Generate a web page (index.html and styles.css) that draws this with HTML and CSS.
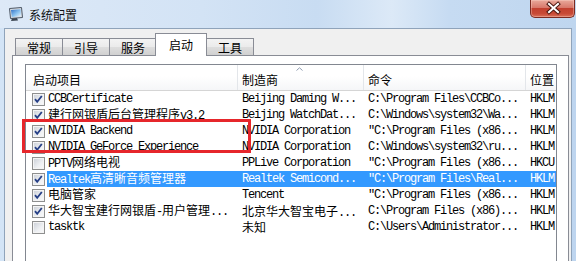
FILE: index.html
```html
<!DOCTYPE html>
<html lang="zh-CN">
<head>
    <meta charset="UTF-8">
    <title>系统配置</title>
    <link rel="stylesheet" href="styles.css">
</head>
<body>
    <div class="window">
        <div class="titlebar">
            <svg class="app-icon" viewBox="0 0 16 16">
                <defs>
                    <linearGradient id="scr" x1="0" y1="0" x2="1" y2="1">
                        <stop offset="0" stop-color="#2f6fc4"/>
                        <stop offset="0.55" stop-color="#8cc4f0"/>
                        <stop offset="1" stop-color="#f2f7fb"/>
                    </linearGradient>
                </defs>
                <path d="M1.5 2.5 L13.5 1.5 L14.5 11.5 L2.5 12.5 Z" fill="#d9dde2" stroke="#4d5866"/>
                <path d="M3 4 L12.5 3.2 L13.2 10.2 L3.8 11 Z" fill="url(#scr)"/>
                <path d="M4 12.5 L9 12 L10 14.5 L3 15 Z" fill="#3c4652"/>
            </svg>
            <span class="title">系统配置</span>
            <div class="close">
                <svg viewBox="0 0 45 18" width="45" height="18">
                    <path d="M19 5 L28 13 M28 5 L19 13" stroke="#4a1710" stroke-width="4" stroke-linecap="square"/>
                    <path d="M19 5 L28 13 M28 5 L19 13" stroke="#fff" stroke-width="2" stroke-linecap="square"/>
                </svg>
            </div>
        </div>

        <div class="client">
            <div class="tabs">
                <div class="tab">常规</div>
                <div class="tab">引导</div>
                <div class="tab">服务</div>
                <div class="tab active">启动</div>
                <div class="tab">工具</div>
            </div>

            <div class="panel">
                <div class="list">
                    <div class="header">
                        <div class="hcell first">启动项目</div>
                        <div class="hcell sorted">
                            制造商
                            <svg class="sort-arrow" viewBox="0 0 7 4" width="7" height="4">
                                <path d="M0.5 3.5 L3.5 0.8 L6.5 3.5" fill="none" stroke="#8d9bb0" stroke-width="1"/>
                            </svg>
                        </div>
                        <div class="hcell">命令</div>
                        <div class="hcell">位置</div>
                    </div>

                    <div class="row">
                        <div class="cell first"><span class="cb on"></span><span class="name">CCBCertificate</span></div>
                        <div class="cell">Beijing Daming W...</div>
                        <div class="cell">C:\Program Files\CCBCo...</div>
                        <div class="cell">HKLM'</div>
                    </div>
                    <div class="row">
                        <div class="cell first"><span class="cb on"></span><span class="name"><span class="cj">建行网银盾后台管理程序</span>v3.2</span></div>
                        <div class="cell">Beijing WatchDat...</div>
                        <div class="cell">C:\Windows\system32\Wa...</div>
                        <div class="cell">HKLM'</div>
                    </div>
                    <div class="row">
                        <div class="cell first"><span class="cb on"></span><span class="name">NVIDIA Backend</span></div>
                        <div class="cell">NVIDIA Corporation</div>
                        <div class="cell">"C:\Program Files (x86...</div>
                        <div class="cell">HKLM'</div>
                    </div>
                    <div class="row">
                        <div class="cell first"><span class="cb on"></span><span class="name">NVIDIA GeForce Experience</span></div>
                        <div class="cell">NVIDIA Corporation</div>
                        <div class="cell">C:\Windows\system32\ru...</div>
                        <div class="cell">HKLM'</div>
                    </div>
                    <div class="row">
                        <div class="cell first"><span class="cb"></span><span class="name">PPTV<span class="cj">网络电视</span></span></div>
                        <div class="cell">PPLive Corporation</div>
                        <div class="cell">"C:\Program Files (x86...</div>
                        <div class="cell">HKCU'</div>
                    </div>
                    <div class="row selected">
                        <div class="cell first"><span class="cb on"></span><span class="name">Realtek<span class="cj">高清晰音频管理器</span></span></div>
                        <div class="cell">Realtek Semicond...</div>
                        <div class="cell">"C:\Program Files\Real...</div>
                        <div class="cell">HKLM'</div>
                    </div>
                    <div class="row">
                        <div class="cell first"><span class="cb on"></span><span class="name"><span class="cj">电脑管家</span></span></div>
                        <div class="cell">Tencent</div>
                        <div class="cell">"C:\Program Files (x86...</div>
                        <div class="cell">HKLM'</div>
                    </div>
                    <div class="row">
                        <div class="cell first"><span class="cb on"></span><span class="name"><span class="cj">华大智宝建行网银盾</span>-<span class="cj">用户管理</span>...</span></div>
                        <div class="cell"><span class="cj">北京华大智宝电子</span>...</div>
                        <div class="cell">C:\Program Files (x86)...</div>
                        <div class="cell">HKLM'</div>
                    </div>
                    <div class="row">
                        <div class="cell first"><span class="cb"></span><span class="name">tasktk</span></div>
                        <div class="cell"><span class="cj">未知</span></div>
                        <div class="cell">C:\Users\Administrator...</div>
                        <div class="cell">HKLM'</div>
                    </div>
                </div>
            </div>
        </div>

        <div class="mark"></div>
    </div>
</body>
</html>
```

FILE: styles.css
```css
body {
    margin: 0;
    width: 576px;
    height: 261px;
    overflow: hidden;
    font-family: "Noto Sans CJK SC", sans-serif;
    font-size: 12px;
    color: #000;
}
.window {
    position: relative;
    height: 261px;
    display: flex;
    flex-direction: column;
    background: linear-gradient(to right, #d3e4f6, #c9ddf3 60%, #bed5ef);
}
.titlebar {
    flex: none;
    height: 28px;
    display: flex;
    align-items: center;
    background: linear-gradient(to right, #dde9f7 0%, #d3e3f5 35%, #c8dcf2 55%, #dce9f7 68%, #c6dbf2 78%, #bfd6ef 100%);
}
.app-icon {
    width: 16px;
    height: 16px;
    margin-left: 8px;
}
.title {
    margin-left: 5px;
    font-size: 12px;
    color: #111;
}
.close {
    align-self: flex-start;
    margin-left: auto;
    margin-right: 1px;
    width: 45px;
    height: 18px;
    box-sizing: border-box;
    border: 1px solid #7b2b22;
    border-top: none;
    border-radius: 0 0 5px 5px;
    background: linear-gradient(#e9a99b, #d8786a 45%, #c2402f 50%, #c84a36 80%, #d9705a);
    box-shadow: inset 0 0 0 1px rgba(255, 220, 210, 0.35);
}
.close svg {
    display: block;
    margin: -1px 0 0 -1px;
}
.client {
    flex: 1;
    display: flex;
    flex-direction: column;
    margin: 0 4px;
    background: #f0f0f0;
    border: 1px solid #8fa3ba;
    border-bottom: none;
}
.tabs {
    display: flex;
    align-items: flex-end;
    padding: 4px 0 0 10px;
    margin-bottom: -1px;
}
.tab {
    width: 48px;
    height: 18px;
    box-sizing: border-box;
    display: flex;
    align-items: center;
    justify-content: center;
    border: 1px solid #898c95;
    border-bottom: none;
    margin-right: -1px;
    background: linear-gradient(#f3f3f3, #ebebeb 45%, #dddddd 50%, #cfcfcf);
}
.tab.active {
    position: relative;
    z-index: 1;
    width: 52px;
    height: 23px;
    margin: 0 -1px 0 -1px;
    padding-bottom: 2px;
    background: #fff;
}
.panel {
    flex: 1;
    min-width: 0;
    background: #fff;
    border: 1px solid #898c95;
    border-bottom: none;
    margin: 0 2px 0 7px;
    padding: 8px 11px 0 12px;
}
.list {
    height: 200px;
    overflow: hidden;
    border: 1px solid #828790;
    border-bottom: none;
}
.header,
.row {
    display: grid;
    grid-template-columns: 212px 126px 162px 80px;
}
.header {
    height: 25px;
    border-bottom: 1px solid #d5d5d5;
    background: linear-gradient(#fff, #fff 45%, #f5f6f8);
}
.hcell {
    position: relative;
    box-sizing: border-box;
    padding: 6px 0 0 4px;
    border-right: 1px solid #e3e6ea;
    white-space: nowrap;
}
.hcell.first {
    padding-left: 7px;
}
.sort-arrow {
    position: absolute;
    top: 2px;
    left: 58px;
}
.row {
    height: 16px;
    line-height: 16px;
    font-family: "Liberation Mono", "Noto Sans CJK SC", monospace;
    font-size: 12px;
    letter-spacing: -1.2px;
}
.cell {
    padding-left: 4px;
    white-space: nowrap;
    overflow: hidden;
}
.cell.first {
    display: flex;
    align-items: center;
    padding-left: 6px;
}
.cj {
    font-family: "Noto Sans CJK SC", sans-serif;
    font-size: 12px;
    letter-spacing: 0;
}
.name {
    flex: 1;
    padding-left: 1px;
    overflow: hidden;
}
.cb {
    flex: none;
    width: 13px;
    height: 13px;
    box-sizing: border-box;
    margin-right: 2px;
    border: 1px solid #8e8f8f;
    background: linear-gradient(135deg, #c9ced6, #eef0f3 60%, #fafafa);
    box-shadow: inset 0 0 0 1px #f4f4f4;
}
.cb.on {
    background-image: url("data:image/svg+xml;utf8,<svg xmlns='http://www.w3.org/2000/svg' viewBox='0 0 11 11'><path d='M2 5.2 L4.2 7.8 L8.8 2' fill='none' stroke='%23263f86' stroke-width='1.8'/></svg>"), linear-gradient(135deg, #c9ced6, #eef0f3 60%, #fafafa);
}
.row.selected .name,
.row.selected .cell:not(.first) {
    background: #3399ff;
    color: #fff;
}
.mark {
    position: absolute;
    left: 22px;
    top: 119px;
    width: 229px;
    height: 34px;
    box-sizing: border-box;
    border: 3px solid #e6262b;
}
```
